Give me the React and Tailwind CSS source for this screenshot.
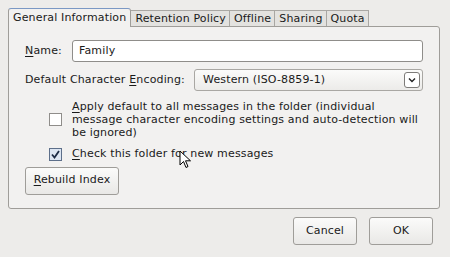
const tabs = ["General Information", "Retention Policy", "Offline", "Sharing", "Quota"];

const U = ({ children }) => <span className="underline underline-offset-2">{children}</span>;

const Button = ({ children, className = "" }) => (
  <button
    className={
      "h-[28px] rounded-[3px] border border-[#9f9d99] bg-gradient-to-b from-[#fbfbfa] to-[#e9e8e6] text-[#1a1a1a] " +
      className
    }
  >
    {children}
  </button>
);

const Checkbox = ({ checked }) => (
  <span
    className={
      "flex h-[13px] w-[13px] shrink-0 items-center justify-center border " +
      (checked ? "border-[#5d6f8a] bg-[#dce5f2]" : "border-[#8f8d8a] bg-white")
    }
  >
    {checked && (
      <svg width="11" height="11" viewBox="0 0 11 11">
        <path d="M2 5.5 L4.5 8.5 L9 2" fill="none" stroke="#1b2a44" strokeWidth="1.8" />
      </svg>
    )}
  </span>
);

export default function App() {
  return (
    <div
      className="relative h-[257px] w-[450px] overflow-hidden bg-[#edecea] text-[11px] tracking-[0.15px] text-[#1a1a1a]"
      style={{ fontFamily: '"DejaVu Sans", sans-serif' }}
    >
      <div className="px-[8px] pt-[8px]">
        {/* tabs */}
        <div className="flex items-end">
          {tabs.map((t, i) =>
            i === 0 ? (
              <div
                key={t}
                className="relative z-10 -mb-px h-[19px] rounded-t-[3px] border border-b-0 border-[#9f9d99] border-t-[#7b98c4] bg-[#f2f1f0] px-[4px] leading-[17px]"
              >
                {t}
              </div>
            ) : (
              <div
                key={t}
                className="h-[16px] border border-b-0 border-l-0 border-[#a9a7a3] bg-[#e3e2df] pl-[4px] pr-[3px] leading-[15px]"
              >
                {t}
              </div>
            )
          )}
        </div>

        {/* panel */}
        <div className="h-[183px] w-[432px] rounded-b-[3px] rounded-tr-[3px] border border-[#9f9d99] bg-[#f2f1f0] px-[16px] pt-[13px]">
          <div className="flex items-center">
            <span className="w-[47px]">
              <U>N</U>ame:
            </span>
            <div className="flex h-[22px] flex-1 items-center rounded-[3px] border border-[#8f8d8a] bg-white px-[6px]">
              Family
            </div>
          </div>

          <div className="mt-[7px] flex items-center">
            <span className="w-[169px]">
              Default Character <U>E</U>ncoding:
            </span>
            <div className="flex h-[22px] flex-1 items-center justify-between rounded-[3px] border border-[#a9a7a3] bg-gradient-to-b from-[#fbfbfa] to-[#ecebe9] pl-[8px] pr-[2px]">
              <span>Western (ISO-8859-1)</span>
              <span className="flex h-[16px] w-[16px] items-center justify-center rounded-[3px] border border-[#7d7b78] bg-white">
                <svg width="10" height="8" viewBox="0 0 10 8">
                  <path d="M2 2.5 L5 5.5 L8 2.5" fill="none" stroke="#222" strokeWidth="1.4" />
                </svg>
              </span>
            </div>
          </div>

          <div className="mt-[9px] flex items-center pl-[24px]">
            <Checkbox />
            <div className="ml-[10px] leading-[13px]">
              <U>A</U>pply default to all messages in the folder (individual
              <br />
              message character encoding settings and auto-detection will
              <br />
              be ignored)
            </div>
          </div>

          <div className="mt-[7px] flex items-center pl-[24px]">
            <Checkbox checked />
            <span className="ml-[10px]">
              <U>C</U>heck this folder for new messages
            </span>
          </div>

          <Button className="mt-[4px] w-[94px]">
            <U>R</U>ebuild Index
          </Button>
        </div>
      </div>

      {/* dialog buttons */}
      <div className="mt-[8px] flex justify-end gap-[12px] pr-[17px]">
        <Button className="w-[64px]">Cancel</Button>
        <Button className="w-[64px]">OK</Button>
      </div>

      {/* mouse cursor */}
      <svg className="absolute left-[179px] top-[150px]" width="14" height="20" viewBox="0 0 14 20">
        <path
          d="M1 1 L1 15 L4.5 11.5 L7 17.5 L9 16.5 L6.5 10.8 L11.5 10.8 Z"
          fill="#fff"
          stroke="#000"
          strokeWidth="1"
          strokeLinejoin="round"
        />
      </svg>
    </div>
  );
}
